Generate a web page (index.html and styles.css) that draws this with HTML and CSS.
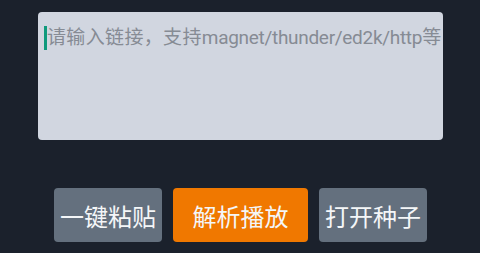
FILE: index.html
```html
<!DOCTYPE html>
<html lang="zh">
<head>
<meta charset="utf-8">
<link rel="stylesheet" href="styles.css">
</head>
<body>
<div class="page">
  <div class="input">
    <span class="caret"></span><span class="placeholder"><span class="cjk">请输入链接，支持</span><span class="latin">magnet/thunder/ed2k/http</span>等</span>
  </div>
  <div class="actions">
    <button class="btn btn-gray btn-narrow">一键粘贴</button>
    <button class="btn btn-orange btn-wide">解析播放</button>
    <button class="btn btn-gray btn-narrow">打开种子</button>
  </div>
</div>
</body>
</html>
```
FILE: styles.css
```css
html, body {
  margin: 0;
  padding: 0;
  background: #1b212c;
  width: 480px;
  height: 253px;
  overflow: hidden;
}
.page {
  display: flex;
  flex-direction: column;
  padding: 12px 0 0 38px;
  font-family: Roboto, "Noto Sans CJK SC", sans-serif;
}
.input {
  box-sizing: border-box;
  width: 405px;
  height: 128px;
  background: #d1d6e0;
  border-radius: 4px;
  padding: 14px 0 0 6px;
  display: flex;
  align-items: flex-start;
  white-space: nowrap;
}
.caret {
  width: 3px;
  height: 24px;
  background: #0f9a7c;
  flex: none;
}
.placeholder {
  font-size: 19px;
  line-height: 24px;
  color: #868b94;
}
.cjk { letter-spacing: 0.35px; }
.latin { letter-spacing: -0.3px; }
.actions {
  display: flex;
  gap: 11px;
  margin: 48px 0 0 16px;
}
.btn {
  height: 54px;
  border: none;
  border-radius: 4px;
  color: #f4f6f8;
  font-family: "Noto Sans CJK SC", sans-serif;
  font-size: 24px;
  padding: 0;
  display: flex;
  align-items: center;
  justify-content: center;
}
.btn-narrow { width: 108px; }
.btn-wide { width: 135px; }
.btn-gray { background: #64707e; }
.btn-orange { background: #f07800; }
```
